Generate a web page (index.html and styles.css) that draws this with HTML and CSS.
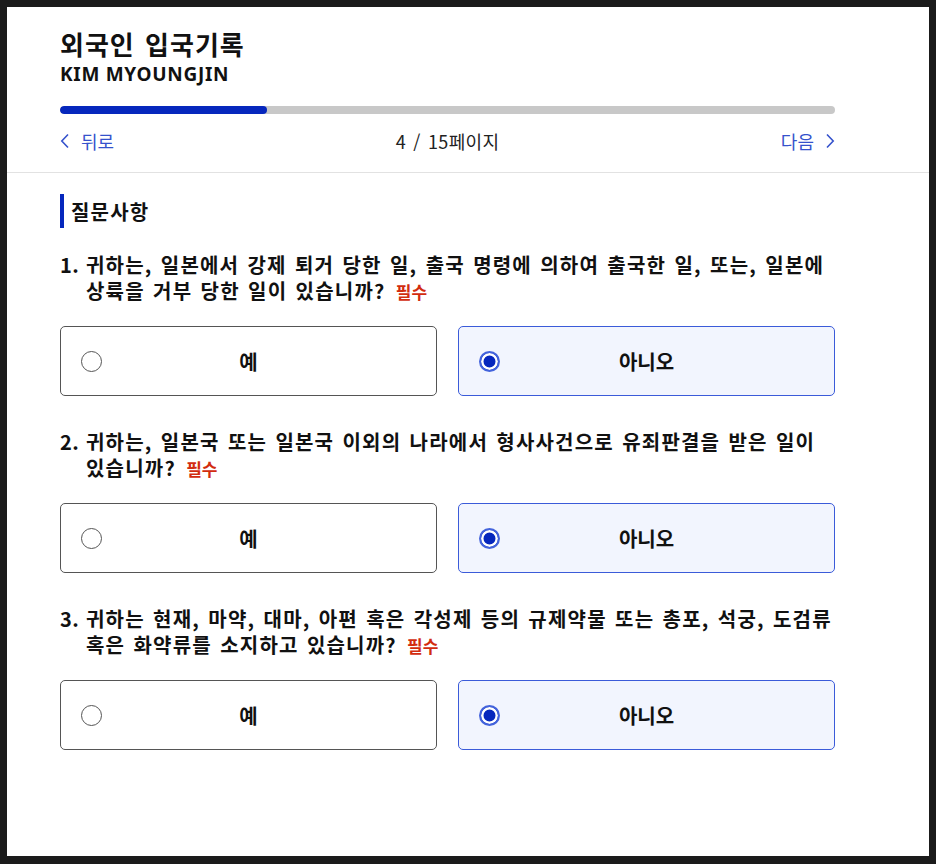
FILE: index.html
```html
<!DOCTYPE html>
<html lang="ko">
<head>
<meta charset="utf-8">
<title>외국인 입국기록</title>
<link rel="stylesheet" href="styles.css">
</head>
<body>
<div class="frame">
  <header class="header">
    <h1 class="title">외국인 입국기록</h1>
    <div class="name">KIM MYOUNGJIN</div>
    <div class="progress"><div class="progress-fill" style="width:26.7%"></div></div>
    <nav class="nav">
      <a class="nav-link" href="#"><svg class="chev" width="10" height="16" viewBox="0 0 10 16"><path d="M8 1.5 L1.8 8 L8 14.5" fill="none" stroke="currentColor" stroke-width="1.6"/></svg><span>뒤로</span></a>
      <span class="page">4 / 15페이지</span>
      <a class="nav-link next" href="#"><span>다음</span><svg class="chev" width="10" height="16" viewBox="0 0 10 16"><path d="M2 1.5 L8.2 8 L2 14.5" fill="none" stroke="currentColor" stroke-width="1.6"/></svg></a>
    </nav>
  </header>
  <main class="content">
    <h2 class="section-title">질문사항</h2>

    <div class="question">
      <p class="q-text"><span class="num">1.</span><span class="body">귀하는, 일본에서 강제 퇴거 당한 일, 출국 명령에 의하여 출국한 일, 또는, 일본에 상륙을 거부 당한 일이 있습니까? <em class="req">필수</em></span></p>
      <div class="options">
        <label class="option"><span class="radio"></span><span class="opt-label">예</span></label>
        <label class="option selected"><span class="radio"></span><span class="opt-label">아니오</span></label>
      </div>
    </div>

    <div class="question">
      <p class="q-text"><span class="num">2.</span><span class="body">귀하는, 일본국 또는 일본국 이외의 나라에서 형사사건으로 유죄판결을 받은 일이 있습니까? <em class="req">필수</em></span></p>
      <div class="options">
        <label class="option"><span class="radio"></span><span class="opt-label">예</span></label>
        <label class="option selected"><span class="radio"></span><span class="opt-label">아니오</span></label>
      </div>
    </div>

    <div class="question">
      <p class="q-text"><span class="num">3.</span><span class="body">귀하는 현재, 마약, 대마, 아편 혹은 각성제 등의 규제약물 또는 총포, 석궁, 도검류 혹은 화약류를 소지하고 있습니까? <em class="req">필수</em></span></p>
      <div class="options">
        <label class="option"><span class="radio"></span><span class="opt-label">예</span></label>
        <label class="option selected"><span class="radio"></span><span class="opt-label">아니오</span></label>
      </div>
    </div>
  </main>
</div>
</body>
</html>
```

FILE: styles.css
```css
* { box-sizing: border-box; }
html { background: #1b1b1b; }
body {
  margin: 0;
  padding: 7px 7px 8px 7px;
  background: #1b1b1b;
  font-family: "Noto Sans", "Noto Sans CJK KR", sans-serif;
  color: #111;
}
.frame {
  background: #fff;
  height: 849px;
  overflow: hidden;
}
.header {
  padding: 21px 94px 19px 53px;
  border-bottom: 1px solid #e2e2e2;
}
.title {
  margin: 0;
  font-family: "Noto Sans CJK KR", sans-serif;
  font-size: 26px;
  font-weight: 700;
  line-height: 32px;
  letter-spacing: 1px;
  word-spacing: 2px;
  color: #111;
}
.name {
  margin-top: 2px;
  font-size: 19px;
  font-weight: 700;
  line-height: 24px;
  letter-spacing: 0.7px;
  color: #111;
}
.progress {
  margin-top: 20px;
  height: 8px;
  border-radius: 4px;
  background: #c8c8c8;
  overflow: hidden;
}
.progress-fill {
  height: 100%;
  border-radius: 4px;
  background: #0627bd;
}
.nav {
  margin-top: 15px;
  display: flex;
  align-items: center;
  justify-content: space-between;
  height: 24px;
  font-family: "Noto Sans CJK KR", sans-serif;
  font-size: 18px;
}
.nav-link {
  display: flex;
  align-items: center;
  gap: 11px;
  color: #3552cc;
  text-decoration: none;
}
.chev { display: block; }
.page {
  color: #222;
  font-size: 18px;
  letter-spacing: 0.3px;
  word-spacing: 2px;
}
.content {
  padding: 21px 94px 0 53px;
}
.section-title {
  margin: 0;
  height: 34px;
  display: flex;
  align-items: center;
  border-left: 4px solid #0627bd;
  padding-left: 7px;
  font-family: "Noto Sans CJK KR", sans-serif;
  font-size: 20px;
  font-weight: 700;
  letter-spacing: 1.2px;
  color: #111;
}
.question { margin-top: 24px; }
.question + .question { margin-top: 33px; }
.q-text {
  margin: 0;
  display: flex;
  font-family: "Noto Sans CJK KR", sans-serif;
  font-size: 20px;
  font-weight: 700;
  line-height: 26px;
  letter-spacing: 1.2px;
  word-spacing: 1.5px;
  word-break: keep-all;
  color: #111;
}
.num { flex: none; width: 26px; letter-spacing: 0.5px; }
.body { flex: 1; }
.req {
  font-style: normal;
  font-size: 17px;
  font-weight: 700;
  line-height: 26px;
  letter-spacing: 0;
  margin-left: 2px;
  color: #d22c0f;
}
.options {
  margin-top: 21px;
  display: grid;
  grid-template-columns: 1fr 1fr;
  column-gap: 21px;
}
.option {
  height: 70px;
  border: 1px solid #555;
  border-radius: 5px;
  background: #fff;
  display: grid;
  grid-template-columns: 1fr auto 1fr;
  align-items: center;
  padding: 0 20px;
  cursor: pointer;
}
.option.selected {
  border-color: #3b5bd9;
  background: #f2f5fe;
}
.radio {
  width: 21px;
  height: 21px;
  border-radius: 50%;
  border: 1px solid #555;
  background: #fff;
  justify-self: start;
}
.option.selected .radio {
  border: 2px solid #4363dc;
  background: #0627bd;
  box-shadow: inset 0 0 0 2.5px #fff;
}
.opt-label {
  font-family: "Noto Sans CJK KR", sans-serif;
  font-size: 20px;
  font-weight: 700;
  color: #111;
}
```
